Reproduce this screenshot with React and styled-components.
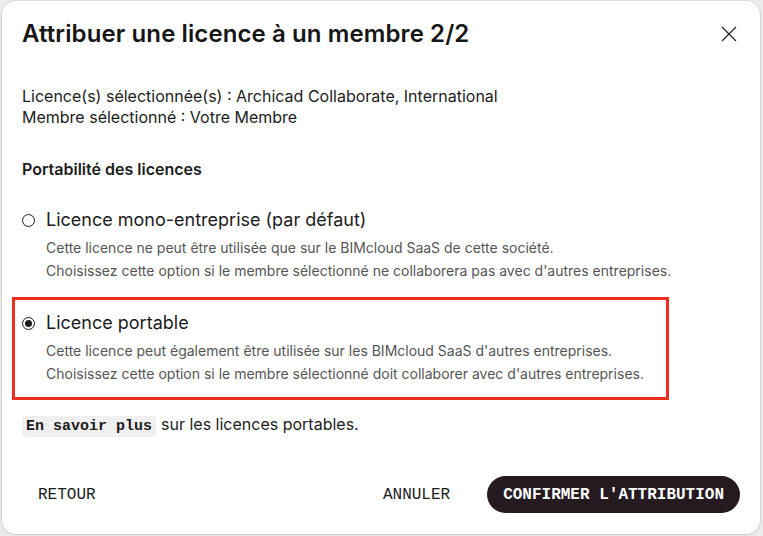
import React, { useState } from 'react'
import styled, { createGlobalStyle } from 'styled-components'

const GlobalStyle = createGlobalStyle`
  html, body {
    margin: 0;
    padding: 0;
    background: #ebebeb;
  }
  * { box-sizing: border-box; }
`

const Overlay = styled.div`
  width: 763px;
  height: 536px;
  padding: 1px 3px 2px 2px;
  display: flex;
`

const Modal = styled.div`
  flex: 1;
  background: #ffffff;
  border-radius: 14px;
  box-shadow: 0 0 0 1px rgba(0, 0, 0, 0.06), 0 1px 3px rgba(0, 0, 0, 0.08);
  display: flex;
  flex-direction: column;
  font-family: Inter, "Noto Sans", sans-serif;
  color: #1c1c1c;
`

const Header = styled.div`
  display: flex;
  align-items: center;
  justify-content: space-between;
  padding: 18px 22px 0 20px;
`

const Title = styled.h1`
  margin: 0;
  font-size: 24px;
  line-height: 30px;
  font-weight: 600;
  letter-spacing: 0.1px;
  color: #161616;
`

const CloseButton = styled.button`
  border: none;
  background: none;
  padding: 0;
  width: 18px;
  height: 18px;
  display: flex;
  align-items: center;
  justify-content: center;
  cursor: pointer;
`

const Body = styled.div`
  padding: 0 0 0 20px;
`

const Info = styled.div`
  margin-top: 37px;
  font-size: 16px;
  line-height: 21px;
`

const SectionTitle = styled.div`
  margin-top: 31px;
  font-size: 16px;
  line-height: 21px;
  font-weight: 600;
`

const Options = styled.div`
  margin-top: 14px;
  margin-left: -10px;
  width: 657px;
  display: flex;
  flex-direction: column;
`

const Option = styled.label`
  display: block;
  border: 3px solid ${p => (p.$highlight ? '#ee2f1f' : 'transparent')};
  padding: 11px 10px 12px 7px;
  cursor: pointer;
`

const OptionHead = styled.div`
  display: flex;
  align-items: center;
  gap: 11px;
  font-size: 18px;
  line-height: 24px;
`

const Radio = styled.span`
  width: 13px;
  height: 13px;
  border-radius: 50%;
  border: 1.5px solid #1c1c1c;
  display: flex;
  align-items: center;
  justify-content: center;
  flex-shrink: 0;

  &::after {
    content: '';
    width: 7px;
    height: 7px;
    border-radius: 50%;
    background: #1c1c1c;
    display: ${p => (p.$checked ? 'block' : 'none')};
  }
`

const Desc = styled.div`
  margin-top: 4px;
  padding-left: 24px;
  font-size: 14px;
  line-height: 23px;
  color: #555555;
  white-space: nowrap;
`

const More = styled.div`
  margin-top: 14px;
  font-size: 16px;
  line-height: 21px;
`

const Code = styled.a`
  font-family: "Liberation Mono", "DejaVu Sans Mono", monospace;
  font-weight: 700;
  font-size: 15px;
  background: #f0f0f0;
  border-radius: 3px;
  padding: 2px 4px;
  color: #1c1c1c;
  text-decoration: none;
  margin-right: 5px;
`

const Footer = styled.div`
  margin-top: auto;
  display: flex;
  align-items: center;
  padding: 0 20px 21px 20px;
`

const Spacer = styled.div`
  flex: 1;
`

const Button = styled.button`
  font-family: "Liberation Mono", "DejaVu Sans Mono", monospace;
  font-size: 16px;
  font-weight: ${p => (p.$primary ? 700 : 400)};
  height: 37px;
  padding: 0 16px;
  border: none;
  border-radius: 19px;
  background: ${p => (p.$primary ? '#241a1f' : 'transparent')};
  color: ${p => (p.$primary ? '#ffffff' : '#1c1c1c')};
  cursor: pointer;
  margin-left: ${p => p.$gap || 0}px;
`

const options = [
  {
    id: 'mono',
    label: 'Licence mono-entreprise (par défaut)',
    lines: [
      'Cette licence ne peut être utilisée que sur le BIMcloud SaaS de cette société.',
      "Choisissez cette option si le membre sélectionné ne collaborera pas avec d'autres entreprises.",
    ],
  },
  {
    id: 'portable',
    label: 'Licence portable',
    lines: [
      "Cette licence peut également être utilisée sur les BIMcloud SaaS d'autres entreprises.",
      "Choisissez cette option si le membre sélectionné doit collaborer avec d'autres entreprises.",
    ],
  },
]

const App = () => {
  const [selected, setSelected] = useState('portable')

  return (
    <>
      <GlobalStyle />
      <Overlay>
        <Modal>
          <Header>
            <Title>Attribuer une licence à un membre 2/2</Title>
            <CloseButton aria-label="Fermer">
              <svg width="16" height="16" viewBox="0 0 16 16">
                <path d="M1 1 L15 15 M15 1 L1 15" stroke="#222" strokeWidth="1.2" fill="none" />
              </svg>
            </CloseButton>
          </Header>

          <Body>
            <Info>
              Licence(s) sélectionnée(s) : Archicad Collaborate, International
              <br />
              Membre sélectionné : Votre Membre
            </Info>

            <SectionTitle>Portabilité des licences</SectionTitle>

            <Options>
              {options.map(o => (
                <Option
                  key={o.id}
                  $highlight={o.id === 'portable'}
                  onClick={() => setSelected(o.id)}
                >
                  <OptionHead>
                    <Radio $checked={selected === o.id} />
                    {o.label}
                  </OptionHead>
                  <Desc>
                    {o.lines.map(l => (
                      <div key={l}>{l}</div>
                    ))}
                  </Desc>
                </Option>
              ))}
            </Options>

            <More>
              <Code href="#">En savoir plus</Code>sur les licences portables.
            </More>
          </Body>

          <Footer>
            <Button>RETOUR</Button>
            <Spacer />
            <Button>ANNULER</Button>
            <Button $primary $gap={21}>CONFIRMER L'ATTRIBUTION</Button>
          </Footer>
        </Modal>
      </Overlay>
    </>
  )
}

export default App
